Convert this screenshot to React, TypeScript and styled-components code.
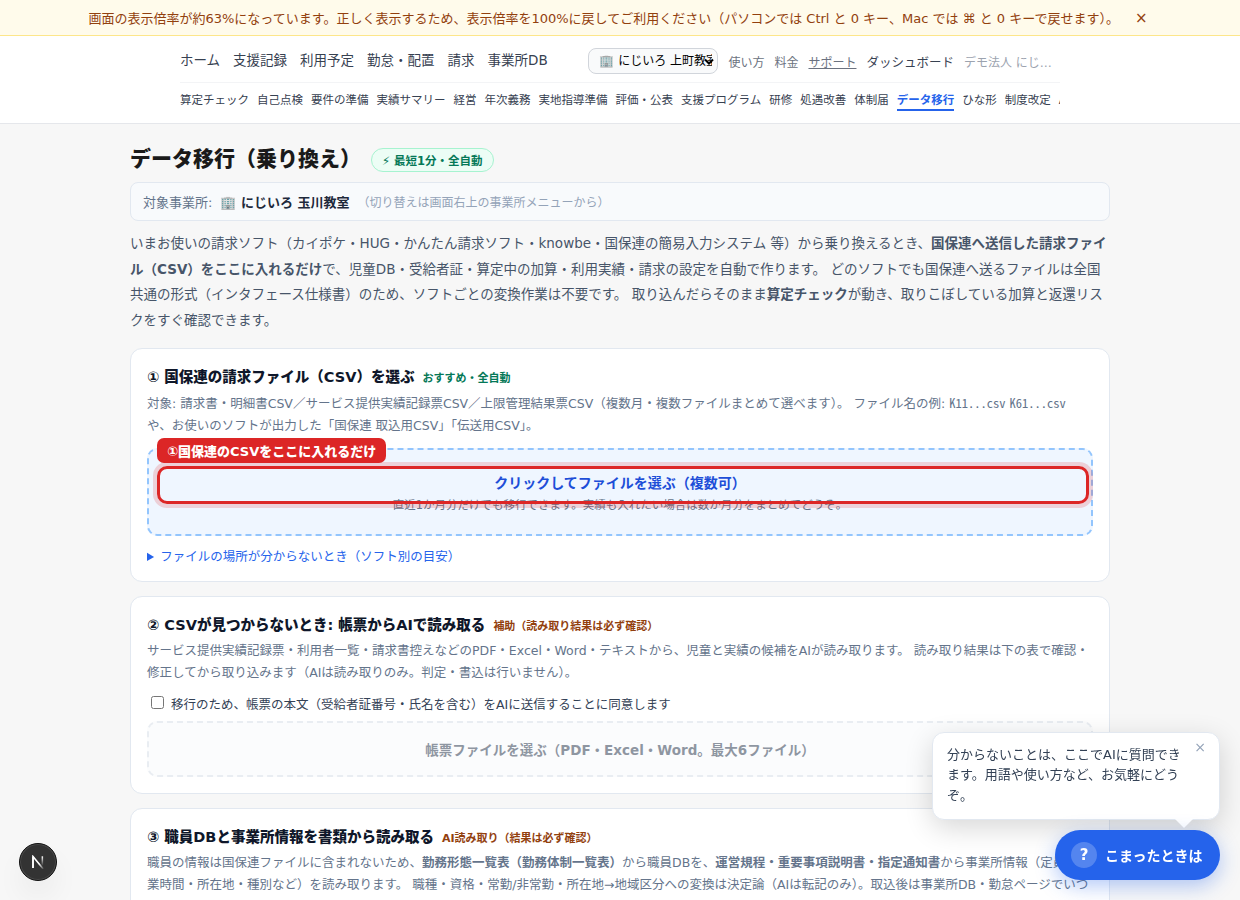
import React from "react";
import styled, { createGlobalStyle, css } from "styled-components";

const GlobalStyle = createGlobalStyle`
  * { box-sizing: border-box; }
  html, body { margin: 0; height: 100%; overflow: hidden; }
  body {
    background: #f7f7f7;
    color: #1a1a1a;
    font-family: "DejaVu Sans", "Noto Sans CJK JP", sans-serif;
  }
  h1, h2, p { margin: 0; }
`;

const Page = styled.div`
  height: 900px;
  overflow: hidden;
`;

const Banner = styled.div`
  display: flex;
  align-items: center;
  justify-content: center;
  gap: 12px;
  height: 36px;
  background: #fffbeb;
  border-bottom: 1px solid #fde68a;
  color: #92400e;
  font-size: 13px;
  white-space: nowrap;
`;

const BannerClose = styled.button`
  border: 0;
  background: none;
  padding: 0 4px;
  color: inherit;
  font: inherit;
  font-size: 15px;
  line-height: 18px;
`;

const Header = styled.header`
  height: 88px;
  background: #fff;
  border-bottom: 1px solid #e5e7eb;
`;

const HeaderInner = styled.div`
  width: 880px;
  margin: 0 auto;
`;

const TopRow = styled.div`
  display: flex;
  align-items: center;
  justify-content: space-between;
  height: 47px;
  padding: 4px 8px 0 0;
  border-bottom: 1px solid #f3f4f6;
`;

const MainNav = styled.nav`
  display: flex;
  gap: 13px;
  margin-top: -4px;
  font-size: 13.5px;
  color: #374151;
  white-space: nowrap;
`;

const Tools = styled.div`
  display: flex;
  align-items: center;
  gap: 10px;
  font-size: 12px;
  color: #6b7280;
  white-space: nowrap;
`;

const SelectBox = styled.span`
  position: relative;
  display: flex;
`;

const OfficeSelect = styled.select`
  appearance: none;
  width: 130px;
  height: 26px;
  padding: 3px 5px 4px 10px;
  border: 1px solid #d1d5db;
  border-radius: 8px;
  background: #f9fafb;
  color: #000;
  font-family: inherit;
  font-size: 12px;
`;

const SelectArrow = styled.svg`
  position: absolute;
  top: 10px;
  right: 4px;
  pointer-events: none;
`;

const ToolLink = styled.span<{ $tone?: "underline" | "strong" | "muted" }>`
  ${({ $tone }) => $tone === "underline" && css`text-decoration: underline;`}
  ${({ $tone }) => $tone === "strong" && css`color: #374151; font-size: 12.5px;`}
  ${({ $tone }) =>
    $tone === "muted" &&
    css`
      color: #9ca3af;
      width: 88px;
      overflow: hidden;
      text-overflow: ellipsis;
    `}
`;

const SubNav = styled.nav`
  display: flex;
  gap: 8px;
  padding-top: 8px;
  overflow: hidden;
  font-size: 11.5px;
  color: #374151;
  white-space: nowrap;
`;

const SubNavItem = styled.span<{ $active?: boolean }>`
  flex: none;
  height: 20px;
  line-height: 18px;
  border-bottom: 2px solid transparent;
  ${({ $active }) =>
    $active &&
    css`
      color: #2563eb;
      font-weight: 700;
      border-color: #2563eb;
    `}
`;

const Main = styled.main`
  width: 980px;
  margin: 0 auto;
  padding-top: 18px;
`;

const TitleRow = styled.div`
  display: flex;
  align-items: center;
  gap: 10px;
  height: 32px;
`;

const Title = styled.h1`
  font-size: 21px;
  line-height: 34px;
  font-weight: 800;
  padding-top: 1px;
`;

const SpeedPill = styled.span`
  display: flex;
  align-items: center;
  height: 24px;
  margin-top: 4px;
  padding: 0 10px;
  border: 1px solid #a7f3d0;
  border-radius: 12px;
  background: #ecfdf5;
  color: #047857;
  font-size: 11.5px;
  font-weight: 700;
`;

const TargetBox = styled.div`
  display: flex;
  align-items: center;
  gap: 8px;
  height: 39px;
  margin-top: 8px;
  padding: 0 12px;
  border: 1px solid #e2e8f0;
  border-radius: 8px;
  background: #f8fafc;
  color: #64748b;
  font-size: 13px;
`;

const OfficeName = styled.strong`
  color: #1e293b;
`;

const TargetNote = styled.span`
  color: #94a3b8;
  font-size: 12px;
`;

const Lead = styled.p`
  margin: 10px 0 14px;
  color: #475569;
  font-size: 13.5px;
  line-height: 25.65px;
`;

const Card = styled.section<{ $height: number }>`
  height: ${({ $height }) => $height}px;
  margin-bottom: 14px;
  padding: 16px;
  border: 1px solid #e2e8f0;
  border-radius: 12px;
  background: #fff;
`;

const CardTitle = styled.h2`
  display: flex;
  align-items: baseline;
  gap: 8px;
  height: 24px;
  line-height: 24px;
  color: #0f172a;
  font-size: 14.5px;
  font-weight: 800;
`;

const CardTag = styled.span<{ $tone: "green" | "amber" }>`
  color: ${({ $tone }) => ($tone === "green" ? "#047857" : "#92400e")};
  font-size: 11px;
  font-weight: 700;
`;

const CardText = styled.p`
  margin-top: 3px;
  color: #64748b;
  font-size: 12.5px;
  line-height: 21.875px;
`;

const FileCode = styled.code`
  font-family: "Noto Sans Mono CJK JP", monospace;
  font-size: 12.5px;
`;

const DropZone = styled.div`
  position: relative;
  height: 88px;
  margin-top: 12px;
  padding-top: 20px;
  border: 2px dashed #93c5fd;
  border-radius: 10px;
  background: #eff6ff;
  text-align: center;
`;

const DropTitle = styled.div`
  color: #1d4ed8;
  font-size: 14px;
  line-height: 26px;
  font-weight: 700;
`;

const DropHint = styled.div`
  color: #64748b;
  font-size: 11.5px;
  line-height: 18px;
`;

const Highlight = styled.div`
  position: absolute;
  top: 16px;
  left: 8px;
  right: 2px;
  height: 38px;
  border: 3px solid #dc2626;
  border-radius: 10px;
  box-shadow: 0 0 0 4px rgba(220, 38, 38, 0.18);
`;

const HighlightLabel = styled.div`
  position: absolute;
  top: -12px;
  left: 8px;
  height: 25px;
  padding: 0 10px;
  border-radius: 7px;
  background: #dc2626;
  color: #fff;
  font-size: 13px;
  line-height: 27px;
  font-weight: 800;
  white-space: nowrap;
`;

const Help = styled.details`
  margin-top: 11px;
  color: #2563eb;
  font-size: 12.5px;
  line-height: 20px;
`;

const Consent = styled.label`
  display: flex;
  align-items: center;
  height: 22px;
  margin-top: 9px;
  color: #334155;
  font-size: 12.5px;
`;

const Check = styled.input`
  width: 13px;
  height: 13px;
  margin: 0 7px 2px 4px;
`;

const FilePicker = styled.div`
  display: flex;
  align-items: center;
  justify-content: center;
  height: 56px;
  margin-top: 7px;
  border: 2px dashed #d8dfe8;
  border-radius: 10px;
  background: #f8fafc;
  color: #334155;
  font-size: 13.5px;
  font-weight: 700;
  opacity: 0.55;
`;

const Bubble = styled.aside`
  position: fixed;
  right: 20px;
  bottom: 80px;
  width: 288px;
  height: 88px;
  padding: 11.6px 36px 0 14px;
  border: 1px solid #e2e8f0;
  border-radius: 12px;
  background: #fff;
  box-shadow: 0 8px 28px rgba(0, 0, 0, 0.16);
  color: #334155;
  font-size: 13px;
  line-height: 20.6px;

  &::after {
    content: "";
    position: absolute;
    right: 26px;
    bottom: -9px;
    border: 9px solid transparent;
    border-top-color: #fff;
    border-bottom: 0;
  }
`;

const BubbleClose = styled.button`
  position: absolute;
  top: 4px;
  right: 13px;
  padding: 0;
  border: 0;
  background: none;
  color: #94a3b8;
  font: 14px/20px "DejaVu Sans", sans-serif;
`;

const HelpButton = styled.button`
  position: fixed;
  right: 20px;
  bottom: 20px;
  display: flex;
  align-items: center;
  gap: 8px;
  width: 165px;
  height: 50px;
  padding: 0 16px;
  border: 0;
  border-radius: 25px;
  background: #2563eb;
  box-shadow: 0 6px 20px rgba(37, 99, 235, 0.35);
  color: #fff;
  font-family: inherit;
  font-size: 14px;
  font-weight: 700;
  white-space: nowrap;
`;

const HelpMark = styled.span`
  display: grid;
  place-items: center;
  width: 26px;
  height: 26px;
  border-radius: 50%;
  background: rgba(255, 255, 255, 0.22);
  font-size: 15px;
`;

const DevBadge = styled.div`
  position: fixed;
  left: 19px;
  bottom: 19px;
  display: grid;
  place-items: center;
  width: 38px;
  height: 38px;
  border: 1px solid #111;
  border-radius: 50%;
  background: #333;
  box-shadow: inset 0 0 0 1px #4a4a4a, 0 16px 32px -8px rgba(0, 0, 0, 0.14);
`;

const mainLinks = ["ホーム", "支援記録", "利用予定", "勤怠・配置", "請求", "事業所DB"];
const subLinks = [
  "算定チェック", "自己点検", "要件の準備", "実績サマリー", "経営", "年次義務", "実地指導準備",
  "評価・公表", "支援プログラム", "研修", "処遇改善", "体制届", "データ移行", "ひな形", "制度改定", "AI相談",
];

export default function App() {
  return (
    <Page lang="ja">
      <GlobalStyle />
      <Banner>
        <span>画面の表示倍率が約63%になっています。正しく表示するため、表示倍率を100%に戻してご利用ください（パソコンでは Ctrl と 0 キー、Mac では ⌘ と 0 キーで戻せます）。</span>
        <BannerClose>×</BannerClose>
      </Banner>
      <Header>
        <HeaderInner>
          <TopRow>
            <MainNav>{mainLinks.map((l) => <span key={l}>{l}</span>)}</MainNav>
            <Tools>
              <SelectBox>
                <OfficeSelect><option>🏢 にじいろ 上町教室</option></OfficeSelect>
                <SelectArrow width="10" height="8" viewBox="0 0 10 8" fill="none">
                  <path d="M1 1.5L5 5.5L9 1.5" stroke="#000" strokeWidth="2" />
                </SelectArrow>
              </SelectBox>
              <ToolLink>使い方</ToolLink>
              <ToolLink>料金</ToolLink>
              <ToolLink $tone="underline">サポート</ToolLink>
              <ToolLink $tone="strong">ダッシュボード</ToolLink>
              <ToolLink $tone="muted">デモ法人 にじいろ</ToolLink>
            </Tools>
          </TopRow>
          <SubNav>
            {subLinks.map((l) => <SubNavItem key={l} $active={l === "データ移行"}>{l}</SubNavItem>)}
          </SubNav>
        </HeaderInner>
      </Header>
      <Main>
        <TitleRow>
          <Title>データ移行（乗り換え）</Title>
          <SpeedPill>⚡ 最短1分・全自動</SpeedPill>
        </TitleRow>
        <TargetBox>
          <span>対象事業所:</span>
          <OfficeName>🏢 にじいろ 玉川教室</OfficeName>
          <TargetNote>（切り替えは画面右上の事業所メニューから）</TargetNote>
        </TargetBox>
        <Lead>
          いまお使いの請求ソフト（カイポケ・HUG・かんたん請求ソフト・knowbe・国保連の簡易入力システム 等）から乗り換えるとき、<strong>国保連へ送信した請求ファイル（CSV）をここに入れるだけ</strong>で、児童DB・受給者証・算定中の加算・利用実績・請求の設定を自動で作ります。 どのソフトでも国保連へ送るファイルは全国共通の形式（インタフェース仕様書）のため、ソフトごとの変換作業は不要です。 取り込んだらそのまま<strong>算定チェック</strong>が動き、取りこぼしている加算と返還リスクをすぐ確認できます。
        </Lead>
        <Card $height={234}>
          <CardTitle>① 国保連の請求ファイル（CSV）を選ぶ<CardTag $tone="green">おすすめ・全自動</CardTag></CardTitle>
          <CardText>
            対象: 請求書・明細書CSV／サービス提供実績記録票CSV／上限管理結果票CSV（複数月・複数ファイルまとめて選べます）。 ファイル名の例: <FileCode>K11...csv</FileCode> <FileCode>K61...csv</FileCode> や、お使いのソフトが出力した「国保連 取込用CSV」「伝送用CSV」。
          </CardText>
          <DropZone>
            <DropTitle>クリックしてファイルを選ぶ（複数可）</DropTitle>
            <DropHint>直近1か月分だけでも移行できます。実績も入れたい場合は数か月分をまとめてどうぞ。</DropHint>
            <Highlight />
            <HighlightLabel>①国保連のCSVをここに入れるだけ</HighlightLabel>
          </DropZone>
          <Help><summary>ファイルの場所が分からないとき（ソフト別の目安）</summary></Help>
        </Card>
        <Card $height={198}>
          <CardTitle>② CSVが見つからないとき: 帳票からAIで読み取る<CardTag $tone="amber">補助（読み取り結果は必ず確認）</CardTag></CardTitle>
          <CardText>
            サービス提供実績記録票・利用者一覧・請求書控えなどのPDF・Excel・Word・テキストから、児童と実績の候補をAIが読み取ります。 読み取り結果は下の表で確認・修正してから取り込みます（AIは読み取りのみ。判定・書込は行いません）。
          </CardText>
          <Consent><Check type="checkbox" />移行のため、帳票の本文（受給者証番号・氏名を含む）をAIに送信することに同意します</Consent>
          <FilePicker>帳票ファイルを選ぶ（PDF・Excel・Word。最大6ファイル）</FilePicker>
        </Card>
        <Card $height={240}>
          <CardTitle>③ 職員DBと事業所情報を書類から読み取る<CardTag $tone="amber">AI読み取り（結果は必ず確認）</CardTag></CardTitle>
          <CardText>
            職員の情報は国保連ファイルに含まれないため、<strong>勤務形態一覧表（勤務体制一覧表）</strong>から職員DBを、<strong>運営規程・重要事項説明書・指定通知書</strong>から事業所情報（定員・営業時間・所在地・種別など）を読み取ります。 職種・資格・常勤/非常勤・所在地→地域区分への変換は決定論（AIは転記のみ）。取込後は事業所DB・勤怠ページでいつ
          </CardText>
        </Card>
      </Main>
      <Bubble>
        分からないことは、ここでAIに質問できます。用語や使い方など、お気軽にどうぞ。
        <BubbleClose>×</BubbleClose>
      </Bubble>
      <HelpButton><HelpMark>?</HelpMark>こまったときは</HelpButton>
      <DevBadge>
        <svg width="14" height="14" viewBox="0 0 14 14" fill="none">
          <defs>
            <linearGradient id="stem" x1="0" y1="0" x2="0" y2="1">
              <stop offset="0" stopColor="#fff" />
              <stop offset="1" stopColor="#fff" stopOpacity="0" />
            </linearGradient>
            <linearGradient id="slash" x1="0" y1="0" x2="1" y2="1">
              <stop offset="0.6" stopColor="#fff" />
              <stop offset="1" stopColor="#fff" stopOpacity="0.1" />
            </linearGradient>
          </defs>
          <path d="M2 13V1.5L12.3 14" stroke="url(#slash)" strokeWidth="1.6" />
          <path d="M2 13V1.5" stroke="#fff" strokeWidth="1.6" />
          <rect x="10.6" y="1.3" width="1.5" height="9.5" fill="url(#stem)" />
        </svg>
      </DevBadge>
    </Page>
  );
}
